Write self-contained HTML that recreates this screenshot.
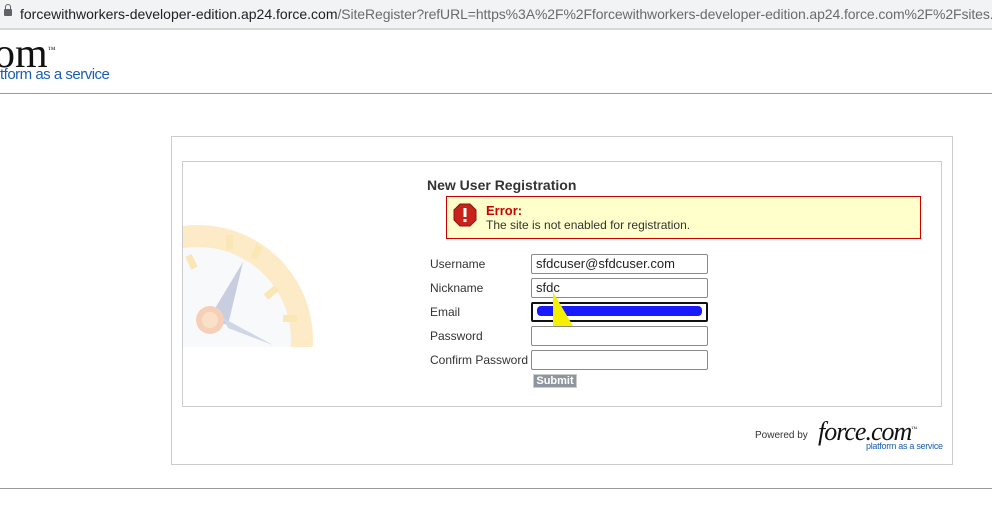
<!DOCTYPE html>
<html><head><meta charset="utf-8"><style>
body{margin:0;width:992px;height:510px;position:relative;background:#fff;font-family:"Liberation Sans",Arial,sans-serif;overflow:hidden}
.abs{position:absolute}
.bar{left:0;top:0;width:992px;height:28px;background:#f1f3f4;border-bottom:2px solid #d7d7d7}
.url{left:20px;top:6px;font-size:14px;color:#202124;white-space:nowrap}
.url span{color:#6b6b6b;letter-spacing:-0.1px}
.lbl{left:430px;font-size:12px;color:#333}
.inp{left:531px;font-size:13px;line-height:18px;padding-left:4px;box-sizing:border-box;width:177px;height:20px;color:#222;border:1px solid #8a8a8a;border-radius:2px}
</style></head><body>
<div class="abs bar"></div>
<div class="abs" style="left:4px;top:9px;width:8px;height:7px;background:#5f6368;border-radius:1px"></div>
<div class="abs" style="left:5px;top:4px;width:4px;height:6px;border:1.5px solid #5f6368;border-radius:3px 3px 0 0;border-bottom:none"></div>
<div class="abs url">forcewithworkers-developer-edition.ap24.force.com<span>/SiteRegister?refURL=https%3A%2F%2Fforcewithworkers-developer-edition.ap24.force.com%2F%2Fsites...</span></div>
<div class="abs" style="left:-6px;top:28px;font-family:'Liberation Serif',serif;font-size:42px;color:#111;line-height:44px">om<sup style="font-size:8px">™</sup></div>
<div class="abs" style="left:0;top:66px;font-size:15px;color:#1a5fb4;letter-spacing:-0.5px">tform as a service</div>
<div class="abs" style="left:0;top:93px;width:992px;height:1px;background:#999"></div>
<div class="abs" style="left:171px;top:136px;width:780px;height:327px;border:1px solid #ccc"></div>
<div class="abs" style="left:182px;top:161px;width:758px;height:244px;border:1px solid #ccc"></div>
<svg class="abs" style="left:183px;top:200px" width="133" height="147" viewBox="0 0 133 147">
<circle cx="15" cy="140" r="115" fill="#fdebc8"/>
<circle cx="15" cy="140" r="93" fill="#f7f9fa"/>
<g fill="#fbe6b5"><rect x="43" y="35" width="7" height="15"/><rect x="70" y="45" width="7" height="14" transform="rotate(25 73 52)"/><rect x="85" y="85" width="7" height="14" transform="rotate(50 88 92)"/><rect x="100" y="115" width="14" height="7"/><rect x="5" y="55" width="7" height="14" transform="rotate(-25 8 62)"/></g>
<polygon points="60,62 25,120 45,125" fill="#c8cde0"/>
<polygon points="40,118 90,145 45,128" fill="#d0d6e6"/>
<circle cx="27" cy="120" r="14" fill="#f5cfb8"/><circle cx="27" cy="120" r="8" fill="#fbe0c8"/>
</svg>
<div class="abs" style="left:427px;top:177px;font-size:14px;font-weight:bold;color:#333">New User Registration</div>
<div class="abs" style="left:446px;top:196px;width:473px;height:41px;background:#ffffcc;border:1px solid #c00"></div>
<svg class="abs" style="left:453px;top:203px" width="24" height="24" viewBox="0 0 24 24"><polygon points="7,1 17,1 23,7 23,17 17,23 7,23 1,17 1,7" fill="#c8231b" stroke="#8e1410"/><rect x="10.5" y="5" width="3" height="9" fill="#fff"/><rect x="10.5" y="16" width="3" height="3" fill="#fff"/></svg>
<div class="abs" style="left:486px;top:203px;font-size:13px;font-weight:bold;color:#c00">Error:</div>
<div class="abs" style="left:486px;top:218px;font-size:12px;color:#333">The site is not enabled for registration.</div>
<div class="abs lbl" style="top:257px">Username</div>
<div class="abs lbl" style="top:281px">Nickname</div>
<div class="abs lbl" style="top:305px">Email</div>
<div class="abs lbl" style="top:329px">Password</div>
<div class="abs lbl" style="top:353px">Confirm Password</div>
<div class="abs inp" style="top:254px">sfdcuser@sfdcuser.com</div>
<div class="abs inp" style="top:278px">sfdc</div>
<div class="abs inp" style="top:302px;border:2px solid #111"></div>
<div class="abs" style="left:537px;top:306px;width:165px;height:10px;background:#1a1aff;border-radius:4px"></div>
<svg class="abs" style="left:535px;top:292px" width="40" height="36"><polygon points="18,0 38,34 18,34" fill="#f4f000"/></svg>
<div class="abs inp" style="top:326px"></div>
<div class="abs inp" style="top:350px"></div>
<div class="abs" style="left:533px;top:374px;width:44px;height:14px;background:#8d959e;border:1px solid #ccc;color:#fff;font-size:11px;font-weight:bold;text-align:center;line-height:12px;box-sizing:border-box">Submit</div>
<div class="abs" style="left:755px;top:430px;font-size:10px;color:#333">Powered by</div>
<div class="abs" style="left:818px;top:417px;font-family:'Liberation Serif',serif;font-style:italic;font-size:26px;color:#111;letter-spacing:-1px">force.com<sup style="font-size:6px">™</sup></div>
<div class="abs" style="left:866px;top:441px;font-size:9px;color:#1a5fb4;letter-spacing:-0.3px">platform as a service</div>
<div class="abs" style="left:0;top:488px;width:992px;height:1px;background:#999"></div>
</body></html>
